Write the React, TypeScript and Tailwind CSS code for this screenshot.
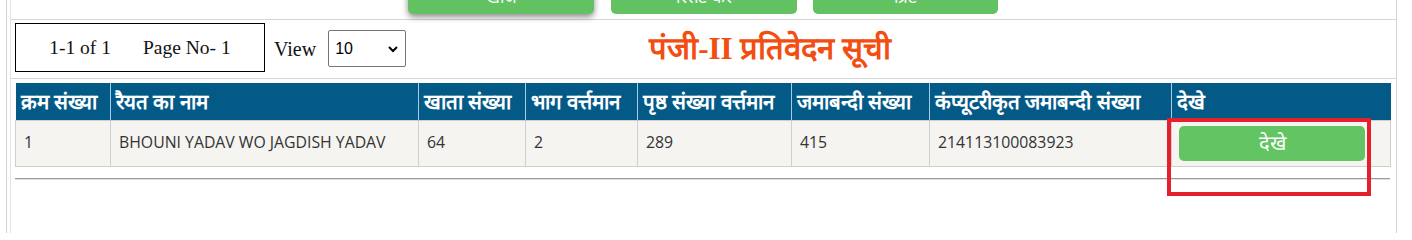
import React from "react";

const cols = [
  { h: "क्रम संख्या", w: 95, d: "1" },
  { h: "रैयत का नाम", w: 308, d: "BHOUNI YADAV WO JAGDISH YADAV" },
  { h: "खाता संख्या", w: 107, d: "64" },
  { h: "भाग वर्त्तमान", w: 112, d: "2" },
  { h: "पृष्ठ संख्या वर्त्तमान", w: 154, d: "289" },
  { h: "जमाबन्दी संख्या", w: 138, d: "415" },
  { h: "कंप्यूटरीकृत जमाबन्दी संख्या", w: 242, d: "214113100083923" },
];

export default function App() {
  return (
    <div className="relative w-[1412px] h-[233px] bg-white overflow-hidden font-['Open_Sans',sans-serif]">
      <div className="ml-[6px] w-[1391px] h-full border-l border-r border-[#d2d2d2] pl-[3px]">
        <div className="h-full border-l border-[#e4e4e4]">
          {/* top buttons */}
          <div className="h-[20px] border-b border-[#d6d6d6] flex items-start pl-[397px]">
            <div className="w-[186px] h-[35px] -mt-[21px] rounded-[5px] bg-[#62c262] text-white text-[17px] flex items-center justify-center shadow-[0_3px_6px_rgba(0,0,0,0.45)]">
              खोज
            </div>
            <div className="ml-[17px] w-[186px] h-[35px] -mt-[21px] rounded-[5px] bg-[#62c262] text-white text-[17px] flex items-center justify-center">
              रिसेट करें
            </div>
            <div className="ml-[16px] w-[185px] h-[35px] -mt-[21px] rounded-[5px] bg-[#62c262] text-white text-[17px] flex items-center justify-center">
              प्रिंट
            </div>
          </div>
          {/* pagination + title */}
          <div className="h-[59px] border-b border-[#d6d6d6] flex items-start pl-[4px] pt-[3px]">
            <div className="w-[250px] h-[49px] border border-black flex items-center justify-center gap-[32px] font-['Liberation_Serif',serif] text-[19.5px] text-[#111]">
              <span>1-1 of 1</span>
              <span>Page No- 1</span>
            </div>
            <span className="ml-[9px] self-center mt-[-4px] font-['Liberation_Serif',serif] text-[20px] text-[#111]">
              View
            </span>
            <div className="ml-[12px] mt-[7px] w-[78px] h-[37px] border border-[#767676] rounded-[2px] flex items-center justify-between pl-[6px] pr-[6px] font-['Liberation_Sans',sans-serif] text-[16px] text-black">
              <span>10</span>
              <svg width="12" height="12" viewBox="0 0 12 12">
                <path d="M2 4 L6 8 L10 4" fill="none" stroke="#000" strokeWidth="2" />
              </svg>
            </div>
            <div className="ml-[243px] self-center mt-[-4px] font-['Liberation_Serif',serif] font-bold text-[31px] text-[#f24e12] leading-none">
              पंजी-II प्रतिवेदन सूची
            </div>
          </div>
          {/* table */}
          <div className="mt-[4px] ml-[4px] w-[1375px]">
            <table className="border-collapse table-fixed w-[1375px]">
              <colgroup>
                {cols.map((c, i) => (
                  <col key={i} style={{ width: c.w }} />
                ))}
                <col style={{ width: 219 }} />
              </colgroup>
              <thead>
                <tr className="h-[37px] bg-[#045a87]">
                  {cols.map((c, i) => (
                    <th
                      key={i}
                      className="text-left text-white font-bold text-[20.5px] px-[5px] border-l border-[#a8cbe4] first:border-l-0 whitespace-nowrap leading-none overflow-visible"
                    >
                      {c.h}
                    </th>
                  ))}
                  <th className="text-left text-white font-bold text-[20.5px] px-[5px] border-l border-[#a8cbe4] leading-none">
                    देखे
                  </th>
                </tr>
              </thead>
              <tbody>
                <tr className="h-[46px] bg-[#f5f4f1]">
                  {cols.map((c, i) => (
                    <td
                      key={i}
                      className="border border-[#cfcfcf] px-[8px] text-[15.8px] text-[#333] whitespace-nowrap"
                    >
                      {c.d}
                    </td>
                  ))}
                  <td className="border border-[#cfcfcf] pl-[7px] align-top pt-[5px]">
                    <div className="w-[186px] h-[35px] rounded-[5px] bg-[#63c463] text-white text-[20px] font-light flex items-center justify-center">
                      देखे
                    </div>
                  </td>
                </tr>
              </tbody>
            </table>
          </div>
          <div className="mt-[11px] ml-[4px] w-[1375px] border-t border-[#9a9a9a] border-b border-b-[#e2e2e2]" />
        </div>
      </div>
      <div className="absolute left-[1167px] top-[118px] w-[204px] h-[78px] border-4 border-[#e3202b]" />
    </div>
  );
}
